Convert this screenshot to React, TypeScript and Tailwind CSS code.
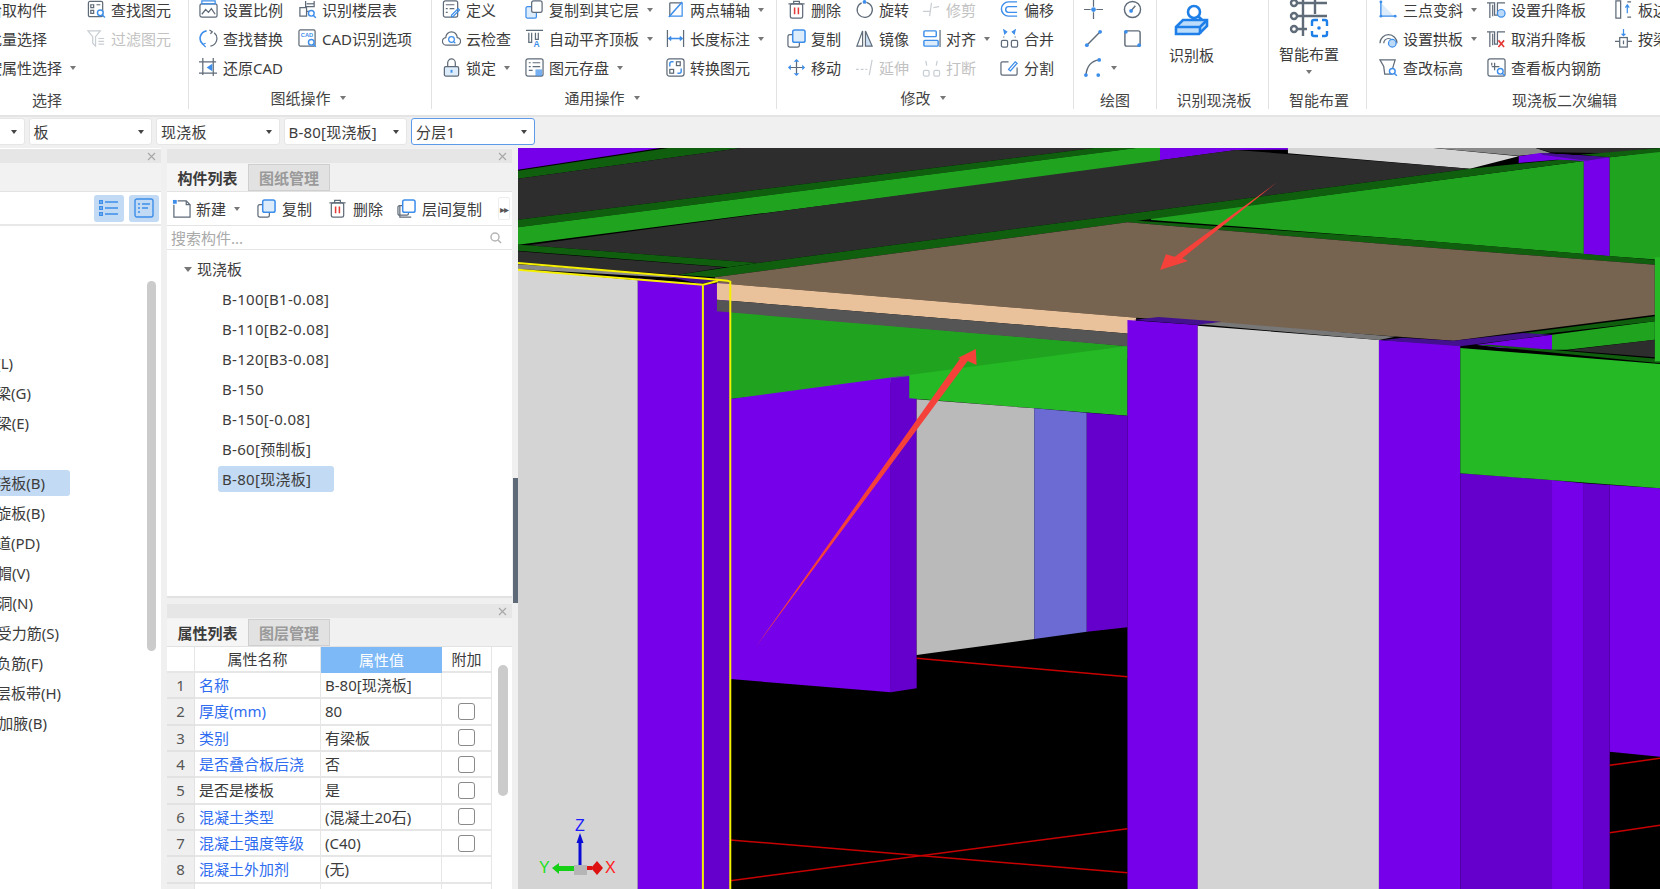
import React from "react";

const B = "#3d8eea";
const G = "#5f6b78";
const L = "#c9ced3";

const Svg = ({ children, w = 19, h = 19, box = "0 0 20 20" }: { children: React.ReactNode; w?: number; h?: number; box?: string }) => (
  <svg width={w} height={h} viewBox={box} fill="none" stroke={G} strokeWidth={1.3} className="shrink-0">
    {children}
  </svg>
);

const Mag = ({ x = 14, y = 14, c = B }: { x?: number; y?: number; c?: string }) => (
  <g stroke={c} strokeWidth={1.5}>
    <circle cx={x} cy={y} r={3} fill="#fff" />
    <path d={`M${x + 2.2} ${y + 2.2}l2.6 2.6`} />
  </g>
);

const icons: Record<string, React.ReactNode> = {
  find: <Svg><rect x="1.5" y="1.5" width="15" height="16" rx="1.5" /><path d="M4 5h3v3H4zM10 5h4M4 11h3v3H4z" /><Mag x={14} y={13.5} /></Svg>,
  filter: <Svg><path d="M1 2h13l-5 6v10l-3-3V8z" stroke={L} /><path d="M12 10h6M12 13h6M12 16h6" stroke={L} /></Svg>,
  scale: <Svg><rect x="1" y="4" width="18" height="14" rx="2" /><path d="M3 15l4-5 3 3 3-4 4 6" /><path d="M3 1h14v3H3z" stroke={B} /></Svg>,
  floor: <Svg><path d="M8 1v6h9V1M2 8h7v9H2zM9 12h3" /><path d="M9 4h8" /><Mag x={14} y={14} /></Svg>,
  replace: <Svg><path d="M8 2A8 8 0 0 0 4 16" stroke={B} strokeWidth={1.7} /><path d="M12 18a8 8 0 0 0 4-14" /><path d="M11 1l3 2-2 2" /><path d="M7 19l-3-3 3-1" stroke={B} /></Svg>,
  cad: <Svg><rect x="1" y="1" width="17" height="17" rx="1.5" /><text x="3" y="8" fontSize="6" fill={B} stroke="none" fontFamily="Liberation Sans" fontWeight="700">CAD</text><Mag x={14} y={14} /></Svg>,
  restore: <Svg><path d="M4 0v18M0 4h18M15 0v19M0 16h19" /><path d="M14 6l-6 4 6 4z" fill={B} stroke="none" /></Svg>,
  define: <Svg><rect x="1.5" y="1" width="15" height="17" rx="2" /><path d="M4 5h9M4 9h2M8 9h5M4 13h2" /><path d="M10 16l7-7 1.5 1.5-7 7H10z" stroke={B} /></Svg>,
  cloud: <Svg><path d="M5 17a4 4 0 0 1-1-8 6 6 0 0 1 12 0 4 4 0 0 1-1 8z" /><circle cx="10" cy="11" r="3" stroke={B} /><path d="M12 13l2 2" stroke={B} /></Svg>,
  lock: <Svg><path d="M6 9V5a4 4 0 0 1 8 0v4" /><rect x="2.5" y="9" width="15" height="10" rx="1.5" fill="#dcecfb" stroke={G} /><path d="M10 12.5v3" stroke={B} strokeWidth={2} /></Svg>,
  toOther: <Svg><rect x="1" y="7" width="11" height="12" rx="1.5" fill="#dcecfb" stroke={B} /><rect x="7" y="1" width="11" height="12" rx="2" fill="#fff" /></Svg>,
  autoAlign: <Svg><path d="M1 1.5h18M4 4v10h3V4M11 4v7h3V4" /><text x="9" y="19" fontSize="9" fill={B} stroke="none" fontFamily="Liberation Sans" fontWeight="700">A</text></Svg>,
  save: <Svg><rect x="1" y="1" width="18" height="18" rx="2" /><path d="M4 5h2M8 5h8M4 9h2M8 9h8M4 13h4" /><rect x="11" y="12" width="7" height="7" fill={B} stroke="none" opacity="0.7" /></Svg>,
  twoPt: <Svg><path d="M4 3h13M4 3v14" /><path d="M3 18L17 2" stroke={B} strokeWidth={1.6} /><path d="M17 3v14H4" stroke={B} /></Svg>,
  dim: <Svg><path d="M1.5 1v18M18.5 1v18" /><path d="M3 10h14M5.5 8l-2.5 2 2.5 2M14.5 8l2.5 2-2.5 2" stroke={B} strokeWidth={1.5} /></Svg>,
  convert: <Svg><rect x="1" y="1" width="18" height="18" rx="2.5" /><path d="M4 9V6a2 2 0 0 1 2-2h2M16 11v3a2 2 0 0 1-2 2h-2" stroke={B} strokeWidth={1.5} /><rect x="11" y="4" width="4" height="4" /><rect x="4" y="12" width="4" height="4" /></Svg>,
  del: <Svg><path d="M1.5 4h17M7 4V1.5h6V4" /><rect x="3.5" y="4" width="13" height="15" rx="2" /><path d="M8 8v7M12 8v7" stroke="#e53935" strokeWidth={1.6} /></Svg>,
  copy: <Svg><rect x="1" y="6" width="12" height="13" rx="2" /><rect x="6" y="1" width="13" height="13" rx="2" fill="#dcecfb" stroke={B} strokeWidth={1.6} /></Svg>,
  layerCopy: <Svg><path d="M3 7v12h12" /><rect x="1" y="7" width="11" height="10" rx="1.5" /><rect x="6" y="1" width="13" height="13" rx="2" fill="#fff" stroke={B} strokeWidth={1.6} /></Svg>,
  move: <Svg><path d="M10 2v16M2 10h16" stroke={G} /><path d="M7 4l3-3 3 3zM7 16l3 3 3-3zM4 7l-3 3 3 3zM16 7l3 3-3 3z" fill={B} stroke="none" /></Svg>,
  rotate: <Svg><path d="M12 2.5A8 8 0 1 1 7 3" /><circle cx="10" cy="2" r="2" fill={B} stroke="none" /></Svg>,
  mirror: <Svg><path d="M8 2L2 18h6z" /><path d="M11 2l7 16h-7z" fill="#cfe2f6" stroke={G} /></Svg>,
  trim: <Svg><path d="M1 12h7M12 8l6-1M10 3L8 17" stroke={L} /></Svg>,
  align: <Svg><rect x="2" y="2" width="13" height="6" rx="1" stroke={B} strokeWidth={1.5} /><rect x="2" y="12" width="15" height="6" rx="1" fill="#dcecfb" stroke={B} strokeWidth={1.5} /><path d="M19 1v18" /></Svg>,
  extend: <Svg><path d="M1 12h3M6 12h3M11 12h2M18 2l-3 16" stroke={L} /></Svg>,
  breakIt: <Svg><rect x="1.5" y="13" width="6" height="6" rx="1.5" stroke={L} /><rect x="12.5" y="13" width="6" height="6" rx="1.5" stroke={L} /><path d="M4 3l1 5M16 3l-1 5" stroke={L} /></Svg>,
  offset: <Svg><path d="M18 2H9a7 7 0 0 0 0 15h9" stroke={B} strokeWidth={1.5} /><path d="M18 7H9a3 3 0 0 0 0 6h9" stroke={B} strokeWidth={1.5} /></Svg>,
  merge: <Svg><rect x="1.5" y="12" width="6.5" height="7" rx="1.5" /><rect x="12" y="12" width="6.5" height="7" rx="1.5" /><path d="M4 1l1 4 2-2zM16 1l-1 4-2-2z" fill={B} stroke={B} /><path d="M4 8v1M16 8v1" /></Svg>,
  split: <Svg><path d="M9 4H2.5A1.5 1.5 0 0 0 1 5.5V16a2 2 0 0 0 2 2h14a1.5 1.5 0 0 0 1-1.5V10" /><path d="M9 12l7-8 2 1.5-7 8z" stroke={B} /></Svg>,
  cross: <Svg><path d="M0 10h7M13 10h7M10 0v7M10 13v7" /><circle cx="10" cy="10" r="2.5" fill={B} stroke="none" /></Svg>,
  dial: <Svg><circle cx="10" cy="10" r="8.5" strokeWidth={1.5} /><path d="M8 12l5-6" strokeWidth={1.5} /><circle cx="8.5" cy="11.5" r="2" fill={B} stroke="none" /></Svg>,
  line: <Svg><path d="M3 17L17 3" strokeWidth={1.5} /><circle cx="3" cy="17" r="2" fill={B} stroke="none" /><circle cx="17" cy="3" r="2" fill={B} stroke="none" /></Svg>,
  rect: <Svg><rect x="2" y="2" width="16" height="16" rx="2" strokeWidth={1.5} /><circle cx="3" cy="3" r="2" fill={B} stroke="none" /><circle cx="17" cy="17" r="2" fill={B} stroke="none" /></Svg>,
  arc: <Svg><path d="M2 18C3 9 8 3 16 2" strokeWidth={1.5} /><circle cx="2" cy="18" r="2" fill={B} stroke="none" /><circle cx="16" cy="2" r="2" fill={B} stroke="none" /><circle cx="15" cy="18" r="2" fill={B} stroke="none" /></Svg>,
  slope: <Svg><path d="M3 17L16 17 3 4z" fill="#dcecfb" stroke="none" /><path d="M2 1v16h15" stroke={B} strokeWidth={1.5} /><circle cx="2" cy="2" r="1.5" fill={B} stroke="none" /><circle cx="2" cy="17" r="1.5" fill={B} stroke="none" /><circle cx="17" cy="17" r="1.5" fill={B} stroke="none" /></Svg>,
  rise: <Svg><path d="M0 3h8v13h3V3h8M3 3v16M6 5v12" /><circle cx="15" cy="14" r="4" fill="#bcd9f7" stroke={B} /></Svg>,
  arch: <Svg><path d="M1 15a9 9 0 0 1 18 0M5 15a5 5 0 0 1 10 0" /><circle cx="14" cy="15" r="4" fill="#bcd9f7" stroke={B} /></Svg>,
  cancel: <Svg><path d="M0 3h8v13h3V3h8M3 3v16M6 5v12" /><path d="M12 12l6 7M18 12l-6 7" stroke="#e53935" strokeWidth={1.7} /></Svg>,
  elev: <Svg><path d="M1 2h16l-3 10v5H6L5 9z" /><Mag x={14} y={14} /></Svg>,
  rebar: <Svg><rect x="1" y="1" width="18" height="18" rx="2" /><path d="M5 9h8M8 5v8M5 5v3" /><Mag x={14} y={14} /></Svg>,
  edge: <Svg><path d="M2 1v18h5V1zM14 2h4M14 18h4" /><path d="M14 14V6M12 8l2-3 2 3" stroke={B} /></Svg>,
  byBeam: <Svg><path d="M10 0v7M8 5l2 2 2-2" stroke={B} /><rect x="6" y="9" width="8" height="10" /><path d="M1 13h5M14 13h5M10 12v4" /></Svg>,
  newDoc: <Svg><path d="M6 2h9l4 4v13H2V6" /><path d="M15 2v4h4" /><path d="M1 1h4v4H1z" fill={B} stroke="none" /></Svg>,
};

const Caret = ({ className = "ml-[7px]" }: { className?: string }) => (
  <span className={`inline-block w-0 h-0 border-x-[3.5px] border-t-[4px] border-x-transparent border-t-[#777] ${className}`} />
);

type ItemProps = { icon?: string; label?: string; caret?: boolean; off?: boolean };

const Item = ({ icon, label, caret, off }: ItemProps) => (
  <div className={`flex items-center h-[29px] gap-[5px] whitespace-nowrap ${off ? "text-[#c2c2c2]" : "text-[#3c3c3c]"}`}>
    {icon && icons[icon]}
    {label && <span>{label}</span>}
    {caret && <Caret className="ml-[3px]" />}
  </div>
);

const Group = ({ width, label, caret, labelClass = "", children }: { width: string; label: string; caret?: boolean; labelClass?: string; children: React.ReactNode }) => (
  <div className={`flex flex-col h-[109px] shrink-0 border-r border-[#e2e2e2] ${width}`}>
    <div className="flex h-[87px]">{children}</div>
    <div className={`flex items-center justify-center gap-[9px] h-[22px] text-[#444] ${caret ? "pr-[4px]" : "pt-[4px]"} ${labelClass}`}>
      <span>{label}</span>
      {caret && <Caret className="" />}
    </div>
  </div>
);

const Ribbon = () => (
  <div className="flex h-[117px] bg-white border-b-2 border-[#e4e4e4] overflow-hidden">
    <Group width="w-[189px]" label="选择" labelClass="pr-[94px]">
      <div className="w-[100px] -ml-[13px] -mt-[5px] shrink-0">
        <Item label="拾取构件" />
        <Item label="批量选择" />
        <Item label="按属性选择" caret />
      </div>
      <div className="-mt-[5px]">
        <Item icon="find" label="查找图元" />
        <Item icon="filter" label="过滤图元" off />
      </div>
    </Group>
    <Group width="w-[243px]" label="图纸操作" caret>
      <div className="w-[99px] ml-[10px] -mt-[5px] shrink-0">
        <Item icon="scale" label="设置比例" />
        <Item icon="replace" label="查找替换" />
        <Item icon="restore" label="还原CAD" />
      </div>
      <div className="-mt-[5px]">
        <Item icon="floor" label="识别楼层表" />
        <Item icon="cad" label="CAD识别选项" />
      </div>
    </Group>
    <Group width="w-[345px]" label="通用操作" caret>
      <div className="w-[83px] ml-[10px] -mt-[5px] shrink-0">
        <Item icon="define" label="定义" />
        <Item icon="cloud" label="云检查" />
        <Item icon="lock" label="锁定" caret />
      </div>
      <div className="w-[141px] -mt-[5px] shrink-0">
        <Item icon="toOther" label="复制到其它层" caret />
        <Item icon="autoAlign" label="自动平齐顶板" caret />
        <Item icon="save" label="图元存盘" caret />
      </div>
      <div className="-mt-[5px]">
        <Item icon="twoPt" label="两点辅轴" caret />
        <Item icon="dim" label="长度标注" caret />
        <Item icon="convert" label="转换图元" />
      </div>
    </Group>
    <Group width="w-[297px]" label="修改" caret>
      <div className="w-[68px] ml-[10px] -mt-[5px] shrink-0">
        <Item icon="del" label="删除" />
        <Item icon="copy" label="复制" />
        <Item icon="move" label="移动" />
      </div>
      <div className="w-[67px] -mt-[5px] shrink-0">
        <Item icon="rotate" label="旋转" />
        <Item icon="mirror" label="镜像" />
        <Item icon="extend" label="延伸" off />
      </div>
      <div className="w-[78px] -mt-[5px] shrink-0">
        <Item icon="trim" label="修剪" off />
        <Item icon="align" label="对齐" caret />
        <Item icon="breakIt" label="打断" off />
      </div>
      <div className="-mt-[5px]">
        <Item icon="offset" label="偏移" />
        <Item icon="merge" label="合并" />
        <Item icon="split" label="分割" />
      </div>
    </Group>
    <Group width="w-[83px]" label="绘图">
      <div className="w-[39px] ml-[10px] -mt-[5px] shrink-0">
        <Item icon="cross" />
        <Item icon="line" />
        <Item icon="arc" caret />
      </div>
      <div className="-mt-[5px]">
        <Item icon="dial" />
        <Item icon="rect" />
      </div>
    </Group>
    <Group width="w-[112px]" label="识别现浇板" labelClass="pl-[3px]">
      <div className="flex flex-col items-center ml-[12px] pt-[3px] gap-[9px]">
        <svg width="36" height="33" viewBox="0 0 36 33" fill="none" stroke="#1f7fe8" strokeWidth={2.6}>
          <circle cx="20" cy="9" r="6" />
          <path d="M24.5 13.5l4 4" />
          <path d="M2 24l7-7h24v6l-8 8H2z" fill="#bcdcfb" />
          <path d="M2 24h24l7-7M26 24v7" />
        </svg>
        <span className="text-[#3c3c3c]">识别板</span>
      </div>
    </Group>
    <Group width="w-[98px]" label="智能布置" labelClass="pl-[3px]">
      <div className="flex flex-col items-center ml-[10px] -mt-[2px]">
        <svg width="40" height="40" viewBox="0 0 40 40" fill="none" stroke={G} strokeWidth={2.4}>
          <path d="M6 5h32M6 18h32M6 31h12M14 0v38M26 0v16" />
          <circle cx="5" cy="5" r="3" fill="#fff" />
          <circle cx="5" cy="18" r="3" fill="#fff" />
          <circle cx="5" cy="31" r="3" fill="#fff" />
          <path d="M23 28v-4a2 2 0 0 1 2-2h4M33 22h3a2 2 0 0 1 2 2v4M38 33v3a2 2 0 0 1-2 2h-3M29 38h-4a2 2 0 0 1-2-2v-3" stroke="#1f7fe8" />
          <circle cx="30" cy="30" r="1.8" fill="#1f7fe8" stroke="none" />
        </svg>
        <span className="mt-[6px] text-[#3c3c3c]">智能布置</span>
        <Caret className="mt-[6px]" />
      </div>
    </Group>
    <div className="flex flex-col h-[109px] flex-1">
      <div className="flex h-[87px]">
        <div className="w-[108px] ml-[12px] -mt-[5px] shrink-0">
          <Item icon="slope" label="三点变斜" caret />
          <Item icon="arch" label="设置拱板" caret />
          <Item icon="elev" label="查改标高" />
        </div>
        <div className="w-[127px] -mt-[5px] shrink-0">
          <Item icon="rise" label="设置升降板" />
          <Item icon="cancel" label="取消升降板" />
          <Item icon="rebar" label="查看板内钢筋" />
        </div>
        <div className="-mt-[5px]">
          <Item icon="edge" label="板边线" />
          <Item icon="byBeam" label="按梁分割" />
        </div>
      </div>
      <div className="flex items-center justify-center h-[22px] pt-[4px] pl-[64px] text-[#444]">现浇板二次编辑</div>
    </div>
  </div>
);

const Select = ({ label, active }: { label: string; active?: boolean }) => (
  <div className={`flex items-center justify-between w-[123.5px] h-[27px] shrink-0 pl-[4px] pr-[7px] rounded-[3px] bg-white border text-[#3c3c3c] ${active ? "border-[#5b9bea]" : "border-[#e6e6e6]"}`}>
    <span className="tracking-[0.2px]">{label}</span>
    <span className="w-0 h-0 border-x-[3px] border-t-[4px] border-x-transparent border-t-[#444]" />
  </div>
);

const SelectBar = () => (
  <div className="flex items-start gap-[4px] h-[31px] pt-[1px] -ml-[99px] bg-[#f0f0f0] shrink-0">
    <Select label="楼层" />
    <Select label="板" />
    <Select label="现浇板" />
    <Select label="B-80[现浇板]" />
    <Select label="分层1" active />
  </div>
);

const PanelHead = () => (
  <div className="flex items-center justify-end h-[14px] shrink-0 pr-[5px] bg-[#e6e6e6] text-[#a5a5a5]">
    <svg width="9" height="9" viewBox="0 0 9 9" stroke="#a8a8a8" strokeWidth={1.2}><path d="M1 1l7 7M8 1L1 8" /></svg>
  </div>
);

const Tabs = ({ a, b }: { a: string; b: string }) => (
  <div className="flex h-[29px] shrink-0 pt-[1px] bg-[#f1f1f1] border-b border-[#e2e2e2]">
    <div className="flex items-center justify-center w-[81px] font-bold text-[#3c3c3c] bg-[#f5f5f5]">{a}</div>
    <div className="flex items-center justify-center w-[82px] font-bold text-[#9a9a9a] bg-[#e2e2e2] border border-[#cfcfcf]">{b}</div>
  </div>
);

const modules = [
  { t: "梁(L)", w: "w-[13px]" },
  { t: "连梁(G)", w: "w-[31px]" },
  { t: "圈梁(E)", w: "w-[29px]" },
  { t: "", w: "w-[29px]" },
  { t: "现浇板(B)", w: "w-[45px]", on: true },
  { t: "螺旋板(B)", w: "w-[45px]" },
  { t: "坡道(PD)", w: "w-[40px]" },
  { t: "柱帽(V)", w: "w-[30px]" },
  { t: "板洞(N)", w: "w-[33px]" },
  { t: "板受力筋(S)", w: "w-[59px]" },
  { t: "板负筋(F)", w: "w-[43px]" },
  { t: "楼层板带(H)", w: "w-[61px]" },
  { t: "板加腋(B)", w: "w-[47px]" },
];

const ModulePanel = () => (
  <div className="relative flex flex-col w-[161px] shrink-0 pt-[1px] bg-white overflow-hidden">
    <PanelHead />
    <div className="h-[29px] shrink-0 bg-[#f2f2f2] border-b border-[#e2e2e2]" />
    <div className="flex items-center justify-end gap-[5px] h-[34px] shrink-0 pr-[2px] border-b-2 border-[#e8e8e8]">
      <div className="flex items-center justify-center w-[30px] h-[27px] rounded-[3px] bg-[#c2daf4]">
        <svg width="20" height="16" viewBox="0 0 20 16" fill="none" stroke={B} strokeWidth={1.4}><path d="M6 2h13M6 8h13M6 14h13" /><rect x="0.7" y="0.7" width="2.6" height="2.6" /><rect x="0.7" y="6.7" width="2.6" height="2.6" /><rect x="0.7" y="12.7" width="2.6" height="2.6" /></svg>
      </div>
      <div className="flex items-center justify-center w-[30px] h-[27px] rounded-[3px] bg-[#c2daf4]">
        <svg width="20" height="20" viewBox="0 0 20 20" fill="none" stroke={B} strokeWidth={1.4}><rect x="1" y="1" width="18" height="18" rx="2" /><path d="M4 6h2M8 6h8M4 10h2M8 10h6M4 14h2" /></svg>
      </div>
    </div>
    <div className="relative flex-1 pt-[122px]">
      {modules.map((m) => (
        <div key={m.t + m.w} className={`flex justify-end items-center h-[30px] whitespace-nowrap text-[#3c3c3c] ${m.w}`}>
          <span className={m.on ? "flex items-center h-[26px] rounded-r-[3px] bg-[#c2daf4] pr-[25px] -mr-[25px]" : ""}>{m.t}</span>
        </div>
      ))}
      <div className="absolute left-[147px] top-[55px] w-[9px] h-[370px] rounded-[5px] bg-[#cbcbcb]" />
    </div>
  </div>
);

const boards = ["B-100[B1-0.08]", "B-110[B2-0.08]", "B-120[B3-0.08]", "B-150", "B-150[-0.08]", "B-60[预制板]", "B-80[现浇板]"];

const ListPanel = () => (
  <div className="flex flex-col h-[450px] shrink-0 pt-[1px] bg-[#f2f2f2] border-b-2 border-[#e2e2e2]">
    <PanelHead />
    <Tabs a="构件列表" b="图纸管理" />
    <div className="flex items-center h-[34px] shrink-0 pl-[5px] bg-white border-b border-[#e4e4e4] text-[#3c3c3c]">
      <span className="flex items-center gap-[5px] w-[85px]">{icons.newDoc}新建<Caret className="ml-[3px]" /></span>
      <span className="flex items-center gap-[6px] w-[71px]">{icons.copy}复制</span>
      <span className="flex items-center gap-[6px] w-[69px]">{icons.del}删除</span>
      <span className="flex items-center gap-[6px] whitespace-nowrap">{icons.layerCopy}层间复制</span>
      <span className="flex items-center justify-center w-[12px] h-[23px] ml-[16px] rounded-[2px] bg-white border border-[#eeeeee] text-[10px] tracking-[-1px] text-[#555]">▸▸</span>
    </div>
    <div className="flex items-center justify-between h-[24px] shrink-0 pl-[4px] pr-[10px] bg-white border-b border-[#e4e4e4] text-[#a9a9a9]">
      <span>搜索构件...</span>
      <svg width="12" height="12" viewBox="0 0 12 12" fill="none" stroke="#b5b5b5" strokeWidth={1.5}><circle cx="5" cy="5" r="4" /><path d="M8 8l3 3" /></svg>
    </div>
    <div className="flex-1 pt-[4px] bg-white text-[#3c3c3c]">
      <div className="flex items-center gap-[5px] h-[30px] pl-[17px]">
        <span className="w-0 h-0 border-x-[4px] border-t-[5px] border-x-transparent border-t-[#777]" />
        <span>现浇板</span>
      </div>
      {boards.map((b, i) => (
        <div key={b} className="flex items-center h-[30px] pl-[51px]">
          <span className={`flex items-center h-[26px] px-[4px] rounded-[3px] tracking-[0.3px] ${i === 6 ? "w-[116px] bg-[#c2daf4]" : ""}`}>{b}</span>
        </div>
      ))}
    </div>
  </div>
);

const rows = [
  { n: "名称", v: "B-80[现浇板]", blue: true },
  { n: "厚度(mm)", v: "80", blue: true, box: true },
  { n: "类别", v: "有梁板", blue: true, box: true },
  { n: "是否叠合板后浇", v: "否", blue: true, box: true },
  { n: "是否是楼板", v: "是", box: true },
  { n: "混凝土类型", v: "(混凝土20石)", blue: true, box: true },
  { n: "混凝土强度等级", v: "(C40)", blue: true, box: true },
  { n: "混凝土外加剂", v: "(无)", blue: true },
  { n: "", v: "" },
];

const PropsPanel = () => (
  <div className="relative flex flex-col flex-1 min-h-0 mt-[6px] bg-[#f2f2f2] overflow-hidden">
    <PanelHead />
    <Tabs a="属性列表" b="图层管理" />
    <div className="flex-1 bg-white text-[#3c3c3c]">
      <div className="grid grid-cols-[28px_126px_121px_50px] w-[325px]">
        <div className="h-[26px] border-r border-b-2 border-[#e6e6e6]" />
        <div className="flex items-center justify-center h-[26px] border-r border-b-2 border-[#e6e6e6]">属性名称</div>
        <div className="flex items-center justify-center h-[26px] bg-[#7db8f7] text-white">属性值</div>
        <div className="flex items-center justify-center h-[26px] border-r border-b-2 border-[#e6e6e6]">附加</div>
        {rows.map((r, i) => (
          <React.Fragment key={i}>
            <div className="flex items-center justify-center h-[26.33px] bg-[#efefef] border-r border-b-2 border-[#e2e2e2] text-[#555]">{i < 8 ? i + 1 : ""}</div>
            <div className={`flex items-center h-[26.33px] pl-[4px] whitespace-nowrap border-r border-b-2 border-[#e6e6e6] ${r.blue ? "text-[#2f6df0]" : ""}`}>{r.n}</div>
            <div className="flex items-center h-[26.33px] pl-[4px] whitespace-nowrap border-r border-b-2 border-[#e6e6e6]">{r.v}</div>
            <div className="flex items-center justify-center h-[26.33px] border-r border-b-2 border-[#e6e6e6]">
              {r.box && <span className="w-[17px] h-[17px] rounded-[3px] border border-[#8a8a8a] bg-white" />}
            </div>
          </React.Fragment>
        ))}
      </div>
      <div className="absolute left-[331px] top-[61px] w-[10px] h-[131px] rounded-[5px] bg-[#cbcbcb]" />
    </div>
  </div>
);

// model view: points measured off the crops, so the viewBox is stretched (1.352 x, 3 y)
const PU = "#7700ea";
const PD = "#6500cc";
const PT = "#43108f";
const GB = "#25ba25";
const GM = "#20a420";
const GD = "#0f5f0f";
const SL = "#2d2d2d";
const GR = "#d4d4d4";

const shapes: [string, string][] = [
  [PU, "24,9 216,9 24,74"],
  [GD, "24,77 227,9 326,9 24,101"],
  [SL, "24,101 326,9 803,9 24,224"],
  [GD, "24,224 803,9 860,9 24,247"],
  [GM, "24,247 860,9 892,9 892,52 24,299"],
  [PU, "892,9 1065,9 1065,14 995,15 892,46"],
  [GR, "1065,9 1262,9 1377,34 1311,71 1065,25"],
  ["#8a8a8a", "1262,9 1400,9 1420,24 1377,32"],
  [SL, "1400,9 1568,9 1500,25 1420,22"],
  [SL, "37,301 995,15 1311,71 348,354"],
  [GM, "880,220 1465,48 1465,327 1216,281 880,225"],
  [PU, "1377,34 1406,24 1500,37 1500,334 1465,327 1465,49 1428,44 1377,54"],
  [PT, "1406,24 1500,37 1469,47 1410,30"],
  [GM, "1500,37 1568,19 1568,344 1500,334"],
  [GD, "1460,29 1568,9 1568,21 1500,37"],
  [GD, "240,389 348,354 1311,71 1433,44 1465,48 880,222 848,232 290,397"],
  [GD, "24,299 37,301 348,354 308,367 24,317"],
  [SL, "24,319 303,367 240,389 24,354"],
  ["#8a8a8a", "24,358 240,392 280,404 24,372"],
  [PT, "218,390 294,406 270,417"],
  [GD, "848,225 1216,281 1561,344 1561,359 1216,301 848,232"],
  [GM, "311,500 848,603 848,640 311,762"],
  [PD, "528,700 563,690 563,1630 528,1642"],
  [PU, "311,762 553,690 528,700 528,1642 311,1602"],
  [GB, "553,690 848,603 848,812 553,760"],
  ["#bababa", "563,763 722,790 722,1482 563,1530"],
  ["#6b6bd3", "722,790 793,803 793,1460 722,1482"],
  [PD, "793,803 848,812 848,1447 793,1460"],
  [PU, "1320,599 1422,569 1422,614 1352,609"],
  [GM, "1422,569 1561,529 1561,584 1442,614 1422,614"],
  [SL, "1442,616 1561,584 1561,637"],
  [GR, "24,374 186,406 186,2232 24,2232"],
  [PU, "186,400 275,419 275,2232 186,2232"],
  [PD, "275,419 311,410 311,2232 275,2232"],
  ["#766350", "290,397 848,232 1216,301 1561,359 1561,509 1289,587 860,518 293,414"],
  [GD, "1383,564 1561,514 1561,529 1401,569"],
  ["#e9c29c", "293,414 860,518 855,567 293,464"],
  ["#555555", "293,464 855,567 855,605 293,499"],
  [PU, "848,525 943,540 943,2232 848,2232"],
  [PT, "856,525 890,516 975,530 945,540"],
  [GR, "943,542 1188,585 1188,2232 943,2232"],
  ["#777777", "945,538 975,532 1210,575 1188,585"],
  [PU, "1188,585 1298,600 1298,2232 1188,2232"],
  [PT, "1190,586 1220,578 1289,587 1383,564 1421,569 1298,604"],
  [PD, "1298,985 1422,1005 1422,2232 1298,2232"],
  [PU, "1422,1005 1465,1015 1465,2232 1422,2232"],
  [PD, "1465,1015 1500,1020 1500,2232 1465,2232"],
  [PU, "1500,1020 1568,1030 1568,1835 1500,1820"],
  [GB, "1298,609 1568,657 1568,1030 1298,985"],
  [GD, "1320,600 1338,599 1568,642 1568,655"],
  [GB, "1561,337 1568,337 1568,649 1561,649"],
];

const redLines = [
  "563,1540 848,1595",
  "311,2085 848,2183",
  "311,2207 848,2051",
  "1500,1861 1568,1840",
  "1500,2063 1568,2041",
];

const Viewport = () => (
  <div className="relative flex-1 bg-black overflow-hidden">
    <svg viewBox="24 9 1544 2223" preserveAspectRatio="none" className="block w-[1142px] h-[741px]">
      {shapes.map(([fill, pts], i) => (
        <polygon key={i} fill={fill} points={pts} />
      ))}
      {redLines.map((pts) => (
        <polyline key={pts} points={pts} fill="none" stroke="#c80000" strokeWidth={1.5} vectorEffect="non-scaling-stroke" />
      ))}
      <path vectorEffect="non-scaling-stroke" fill="none" stroke="#f5f000" strokeWidth={2} d="M24 354L294 404L307 407L311 410V2232M24 374L274 419L294 408M274 419V2232" />
      <polygon fill="#f4413a" points="1050,112 922,340 930,348 892,375 900,328 912,335" />
      <polygon fill="#f4413a" points="643,612 644,660 632,648 345,1507 622,640 618,640" />
    </svg>
    <svg width="90" height="70" viewBox="0 0 90 70" className="absolute left-[20px] top-[671px]">
      <text x="37" y="12" fontSize="16" fill="#1d1dff" fontFamily="Liberation Sans">Z</text>
      <path d="M42 14l3.5 10h-2v24h-3V24h-2z" fill="#0b0bd8" />
      <text x="1" y="54" fontSize="16" fill="#22e022" fontFamily="Liberation Sans">Y</text>
      <path d="M14 49l7-5v3h15v5H21v3z" fill="#16d016" />
      <text x="67" y="54" fontSize="16" fill="#ff2020" fontFamily="Liberation Sans">X</text>
      <path d="M59 42l6 7-6 7-6-7z" fill="#dd1111" />
      <path d="M48 47h6v4h-6z" fill="#dd1111" />
      <rect x="36" y="46" width="13" height="10" fill="#b5b5b5" />
    </svg>
  </div>
);

export default function App() {
  return (
    <div className="flex flex-col w-[1660px] h-[889px] overflow-hidden bg-[#f0f0f0] text-[15px] leading-[20px] font-['Noto_Sans','Noto_Sans_CJK_SC',sans-serif]">
      <Ribbon />
      <SelectBar />
      <div className="flex flex-1 min-h-0">
        <ModulePanel />
        <div className="flex flex-col w-[345px] shrink-0 ml-[6px]">
          <ListPanel />
          <PropsPanel />
        </div>
        <div className="relative w-[6px] shrink-0 bg-[#f0f0f0]">
          <div className="absolute left-[1px] top-[330px] w-[5px] h-[125px] bg-[#5e6a78]" />
        </div>
        <Viewport />
      </div>
    </div>
  );
}
